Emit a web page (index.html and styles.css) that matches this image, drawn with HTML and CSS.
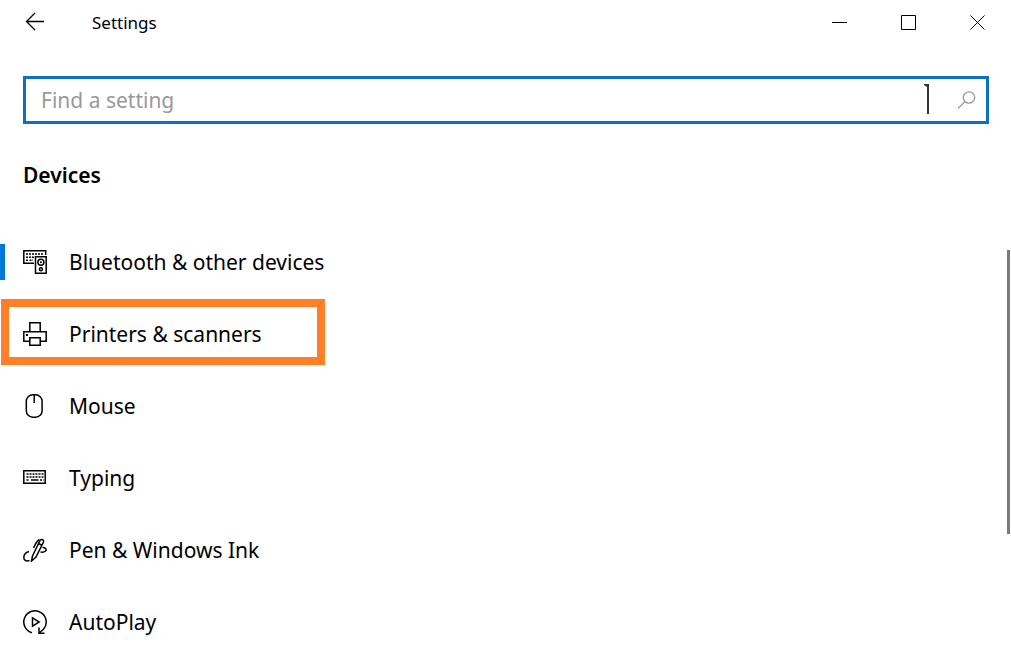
FILE: index.html
```html
<!DOCTYPE html>
<html lang="en">
<head>
    <meta charset="UTF-8">
    <meta name="viewport" content="width=device-width, initial-scale=1.0">
    <title>Settings</title>
    <link rel="stylesheet" href="styles.css">
</head>
<body>
    <header class="titlebar">
        <button class="back" type="button" aria-label="Back">
            <svg width="20" height="20" viewBox="0 0 20 20"><path d="M19 9.500H1.500M10 1L1.500 9.500L10 18"/></svg>
        </button>
        <h1 class="app-title">Settings</h1>
        <div class="window-buttons">
            <button type="button" aria-label="Minimize">
                <svg width="16" height="16" viewBox="0 0 16 16"><path d="M1 8.500H16"/></svg>
            </button>
            <button type="button" aria-label="Maximize">
                <svg width="16" height="16" viewBox="0 0 16 16"><path d="M1.500 1.500H15.500V15.500H1.500Z"/></svg>
            </button>
            <button type="button" aria-label="Close">
                <svg width="16" height="16" viewBox="0 0 16 16"><path d="M1.500 1.500L15.500 15.500M15.500 1.500L1.500 15.500"/></svg>
            </button>
        </div>
    </header>

    <main>
        <form class="search">
            <input type="text" id="search" placeholder="Find a setting" aria-label="Find a setting">
            <svg class="caret" width="6" height="30" viewBox="0 0 6 30"><path d="M0 0H5V30H3V3L0 1Z"/></svg>
            <button type="submit" aria-label="Search">
                <svg width="20" height="20" viewBox="0 0 20 20"><circle cx="13" cy="7.500" r="5.700"/><path d="M9 11.500L2 18.500"/></svg>
            </button>
        </form>

        <h2 class="section-title">Devices</h2>

        <nav>
            <ul class="menu">
                <li>
                    <a class="menu-item active" href="#bluetooth">
                        <svg class="icon" viewBox="0 0 24 24">
                            <path d="M11 13.300H.8V.8H22.700V5"/>
                            <path class="keys" d="M3 4H21M3 7.200H11M3 10.200H5M6.500 10.200H10"/>
                            <path d="M12.500 6.800H23.200V23.200H12.500Z"/>
                            <circle cx="17.900" cy="12.300" r="3"/>
                            <circle cx="17.900" cy="19.300" r="1.500"/>
                            <circle class="dot" cx="17.900" cy="12.300" r="1"/>
                        </svg>
                        <span>Bluetooth &amp; other devices</span>
                    </a>
                </li>
                <li>
                    <a class="menu-item highlighted" href="#printers">
                        <svg class="icon" viewBox="0 0 24 24">
                            <path d="M6.800 9.500V.8H17.200V9.500"/>
                            <path d="M6.500 19.200H.8V9.800H23.200V19.200H17.500"/>
                            <path d="M6.800 15.800H17.200V23.200H6.800Z"/>
                            <path class="dot" d="M3 12H5V14H3Z"/>
                        </svg>
                        <span>Printers &amp; scanners</span>
                    </a>
                </li>
                <li>
                    <a class="menu-item" href="#mouse">
                        <svg class="icon" viewBox="0 0 24 24">
                            <rect x="3.300" y=".8" width="15.800" height="22.400" rx="6.500"/>
                            <path d="M11.200 .8V9"/>
                        </svg>
                        <span>Mouse</span>
                    </a>
                </li>
                <li>
                    <a class="menu-item" href="#typing">
                        <svg class="icon" viewBox="0 0 24 24">
                            <path d="M.8 4.800H22.200V17.200H.8Z"/>
                            <path class="keys" d="M3.500 8H20.500M3.500 11H20.500M3.500 14H6M17 14H20.500"/>
                            <path d="M8 14H15.500"/>
                        </svg>
                        <span>Typing</span>
                    </a>
                </li>
                <li>
                    <a class="menu-item" href="#pen">
                        <svg class="icon" viewBox="0 0 24 24">
                            <path d="M8.500 23L9.500 18L16.500 3.500C17.500 1 21 .8 20.500 4L13 19L8.500 23ZM15.500 5.500L19.500 7.500"/>
                            <path d="M10.500 10C12 6.500 13.500 3 16.500 1.500"/>
                            <path d="M6 13.500C2.500 14.500 .8 17 .8 19.500C.8 22.500 3.500 23.500 6.500 22.500"/>
                            <path d="M19.500 9.500C22.500 9.500 24 11.500 22.500 13C21.500 14 19.500 14.300 17.500 14"/>
                        </svg>
                        <span>Pen &amp; Windows Ink</span>
                    </a>
                </li>
                <li>
                    <a class="menu-item" href="#autoplay">
                        <svg class="icon" viewBox="0 0 24 24">
                            <path d="M9 22.800A11.200 11.200 0 1 1 20.500 19.300L16.500 22.800"/>
                            <path d="M16 17.500V23.200H21.500"/>
                            <path d="M9.500 7.800L16.200 12L9.500 16.200Z"/>
                        </svg>
                        <span>AutoPlay</span>
                    </a>
                </li>
            </ul>
        </nav>
    </main>
    <div class="scroll-thumb"></div>
</body>
</html>
```
FILE: styles.css
```css
*, *::before, *::after {
    box-sizing: border-box;
}
body {
    margin: 0;
    background: #fff;
    color: #000;
    font-family: "Noto Sans", sans-serif;
    font-size: 21px;
}
button {
    display: flex;
    align-items: center;
    justify-content: center;
    padding: 0;
    border: none;
    background: none;
}
svg {
    fill: none;
    stroke: #000;
}
.titlebar {
    display: flex;
    align-items: center;
    height: 44px;
}
.back {
    width: 70px;
    height: 44px;
}
.back svg {
    stroke-width: 1.3;
}
.app-title {
    margin: 0;
    padding-left: 22px;
    font-size: 17px;
    font-weight: 400;
}
.window-buttons {
    display: flex;
    margin-left: auto;
}
.window-buttons button {
    width: 69px;
    height: 44px;
}
.search {
    position: relative;
    display: flex;
    height: 48px;
    margin: 32px 22px 0 23px;
    border: 3px solid #0f6fc5;
}
.search input {
    flex: 1;
    min-width: 0;
    padding: 0 15px;
    border: none;
    outline: none;
    background: none;
    font: inherit;
}
.search input::placeholder {
    color: #999;
    opacity: 1;
}
.search button {
    width: 40px;
}
.search button svg {
    stroke: #999;
    stroke-width: 1.3;
}
.caret {
    position: absolute;
    top: 5px;
    right: 56px;
    fill: #333;
    stroke: none;
}
.section-title {
    margin: 35px 23px;
    font-size: 21px;
    font-weight: 600;
    line-height: 32px;
}
.menu {
    margin: 0;
    padding: 0;
    list-style: none;
}
.menu-item {
    position: relative;
    display: flex;
    align-items: center;
    gap: 22px;
    height: 72px;
    padding: 0 23px;
    color: #000;
    text-decoration: none;
}
.icon {
    width: 24px;
    height: 24px;
    stroke-width: 1.5;
}
.icon .keys {
    stroke-dasharray: 2 1;
}
.icon .dot {
    fill: #000;
    stroke: none;
}
.active::before {
    content: "";
    position: absolute;
    left: 0;
    width: 5px;
    height: 36px;
    background: #0078d7;
}
/* callout frame around the item */
.highlighted::after {
    content: "";
    position: absolute;
    top: 1px;
    left: 1px;
    width: 324px;
    height: 66px;
    border: 8px solid #ff7f27;
}
.scroll-thumb {
    position: fixed;
    top: 250px;
    right: 1px;
    width: 3px;
    height: 284px;
    background: #7a7a7a;
}
```
